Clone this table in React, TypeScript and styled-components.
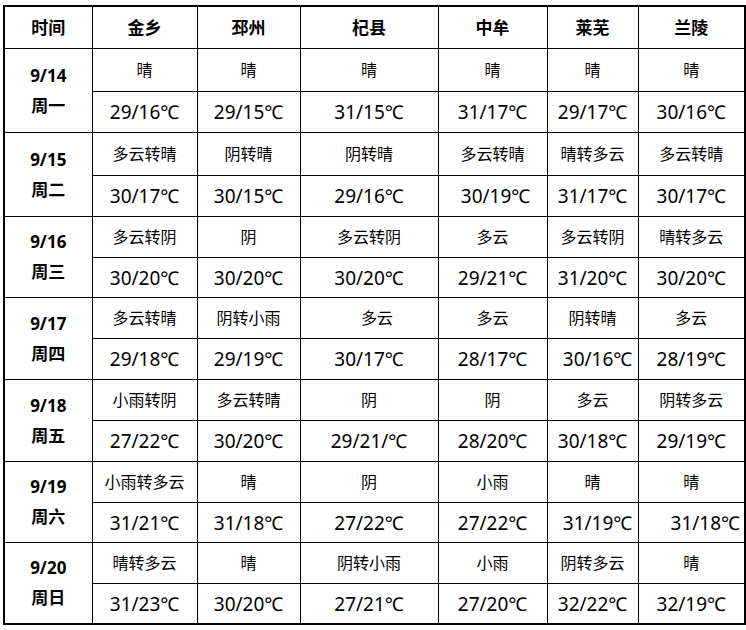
import styled, { createGlobalStyle } from 'styled-components';

const GlobalStyle = createGlobalStyle`
  html, body {
    margin: 0;
    padding: 0;
    background: #ffffff;
  }
  body {
    font-family: "Noto Sans", "Noto Sans CJK SC", sans-serif;
    color: #000;
  }
`;

const Page = styled.div`
  padding: 5px 0 0 3px;
`;

const Table = styled.table`
  border-collapse: collapse;
  table-layout: fixed;
  width: 741px;
  border: 2px solid #000;
`;

const HeadCell = styled.th`
  height: 41px;
  padding: 0;
  border: 1px solid #000;
  font-size: 17px;
  line-height: 20px;
  font-weight: 700;
  text-align: center;
  vertical-align: middle;
`;

const DateCell = styled.td`
  padding: 0;
  border: 1px solid #000;
  font-size: 17px;
  font-weight: 700;
  line-height: 30px;
  text-align: center;
  vertical-align: middle;
`;

const Cell = styled.td<{ $h: number; $shift?: number; $temp?: boolean }>`
  height: ${(p) => p.$h}px;
  padding: 0 0 0 ${(p) => (p.$shift ?? 0) * 2}px;
  border: 1px solid #000;
  font-size: ${(p) => (p.$temp ? 19 : 16)}px;
  line-height: 22px;
  text-align: center;
  vertical-align: middle;
  white-space: nowrap;
`;

const widths = [88, 105, 103, 138, 109, 91, 107];

const cities = ['金乡', '邳州', '杞县', '中牟', '莱芜', '兰陵'];

// temperature row heights, so each day block lands on the sheet's grid
const tempRowHeights = [40, 40, 39, 40, 40, 39, 39];

interface Day {
  date: string;
  week: string;
  weather: string[];
  temps: string[];
  // per-column horizontal nudge, as in the source sheet
  weatherShift?: Record<number, number>;
  tempShift?: Record<number, number>;
}

const days: Day[] = [
  {
    date: '9/14',
    week: '周一',
    weather: ['晴', '晴', '晴', '晴', '晴', '晴'],
    temps: ['29/16℃', '29/15℃', '31/15℃', '31/17℃', '29/17℃', '30/16℃'],
    weatherShift: { 0: -5 },
  },
  {
    date: '9/15',
    week: '周二',
    weather: ['多云转晴', '阴转晴', '阴转晴', '多云转晴', '晴转多云', '多云转晴'],
    temps: ['30/17℃', '30/15℃', '29/16℃', '30/19℃', '31/17℃', '30/17℃'],
    weatherShift: { 0: -4 },
    tempShift: { 3: 3 },
  },
  {
    date: '9/16',
    week: '周三',
    weather: ['多云转阴', '阴', '多云转阴', '多云', '多云转阴', '晴转多云'],
    temps: ['30/20℃', '30/20℃', '30/20℃', '29/21℃', '31/20℃', '30/20℃'],
  },
  {
    date: '9/17',
    week: '周四',
    weather: ['多云转晴', '阴转小雨', '多云', '多云', '阴转晴', '多云'],
    temps: ['29/18℃', '29/19℃', '30/17℃', '28/17℃', '30/16℃', '28/19℃'],
    weatherShift: { 2: 8 },
    tempShift: { 4: 5 },
  },
  {
    date: '9/18',
    week: '周五',
    weather: ['小雨转阴', '多云转晴', '阴', '阴', '多云', '阴转多云'],
    temps: ['27/22℃', '30/20℃', '29/21/℃', '28/20℃', '30/18℃', '29/19℃'],
  },
  {
    date: '9/19',
    week: '周六',
    weather: ['小雨转多云', '晴', '阴', '小雨', '晴', '晴'],
    temps: ['31/21℃', '31/18℃', '27/22℃', '27/22℃', '31/19℃', '31/18℃'],
    tempShift: { 4: 5, 5: 14 },
  },
  {
    date: '9/20',
    week: '周日',
    weather: ['晴转多云', '晴', '阴转小雨', '小雨', '阴转多云', '晴'],
    temps: ['31/23℃', '30/20℃', '27/21℃', '27/20℃', '32/22℃', '32/19℃'],
  },
];

export default function App() {
  return (
    <Page>
      <GlobalStyle />
      <Table>
        <colgroup>
          {widths.map((w, i) => (
            <col key={i} style={{ width: w }} />
          ))}
        </colgroup>
        <thead>
          <tr>
            <HeadCell>时间</HeadCell>
            {cities.map((c) => (
              <HeadCell key={c}>{c}</HeadCell>
            ))}
          </tr>
        </thead>
        <tbody>
          {days.map((d, di) => [
            <tr key={d.date + 'a'}>
              <DateCell rowSpan={2}>
                {d.date}
                <br />
                {d.week}
              </DateCell>
              {d.weather.map((w, i) => (
                <Cell key={i} $h={40} $shift={d.weatherShift?.[i]}>
                  {w}
                </Cell>
              ))}
            </tr>,
            <tr key={d.date + 'b'}>
              {d.temps.map((t, i) => (
                <Cell key={i} $h={tempRowHeights[di]} $temp $shift={d.tempShift?.[i]}>
                  {t}
                </Cell>
              ))}
            </tr>,
          ])}
        </tbody>
      </Table>
    </Page>
  );
}
